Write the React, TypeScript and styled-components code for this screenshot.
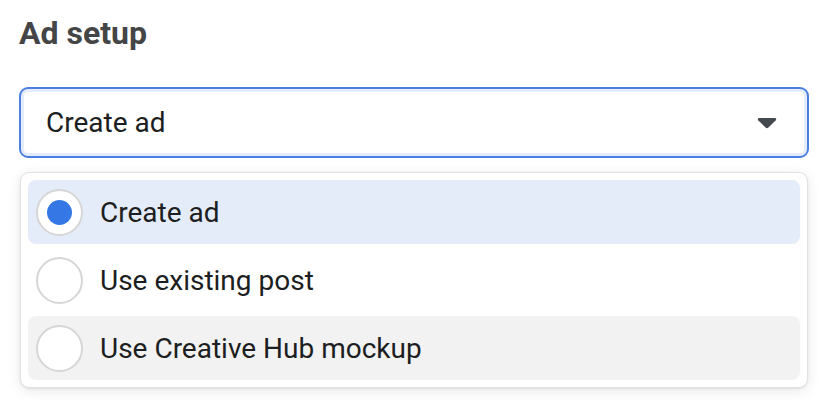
import React from "react";
import styled, { createGlobalStyle } from "styled-components";

const Global = createGlobalStyle`
  html, body { margin: 0; padding: 0; background: #ffffff; }
  body { font-family: Roboto, "Liberation Sans", Arial, sans-serif; -webkit-font-smoothing: antialiased; }
  * { box-sizing: border-box; }
`;

const Page = styled.div`
  width: 830px;
  height: 414px;
  padding: 13px 21px 0 19px;
  overflow: hidden;
`;

const Heading = styled.h2`
  margin: 0 0 34px;
  font-size: 32px;
  line-height: 40px;
  font-weight: 700;
  color: #444546;
`;

const Select = styled.div`
  height: 71px;
  display: flex;
  align-items: center;
  justify-content: space-between;
  padding: 0 30px 0 25px;
  border: 2px solid #4a7ee0;
  border-radius: 9px;
  box-shadow: inset 0 0 0 3px #e4ebf9;
  background: #fff;
  font-size: 28px;
  color: #1c1e21;
`;

const Menu = styled.div`
  margin: 14px 1px 0 1px;
  padding: 7px;
  border: 1px solid #e0e2e5;
  border-radius: 9px;
  background: #fff;
  box-shadow: 0 3px 14px rgba(0, 0, 0, 0.09), 0 1px 2px rgba(0, 0, 0, 0.08);
  display: flex;
  flex-direction: column;
  gap: 4px;
`;

const Row = styled.div<{ $tone: "active" | "hover" | "none" }>`
  height: 64px;
  display: flex;
  align-items: center;
  gap: 17px;
  padding-left: 8px;
  border-radius: 8px;
  background: ${(p) =>
    p.$tone === "active" ? "#e5ecf9" : p.$tone === "hover" ? "#f2f2f2" : "transparent"};
  font-size: 28px;
  color: #1c1e21;
`;

const Radio = styled.span<{ $on?: boolean }>`
  width: 47px;
  height: 47px;
  border-radius: 50%;
  border: 2px solid #d6d6d6;
  background: #fff;
  display: flex;
  align-items: center;
  justify-content: center;
  flex: none;
  &::after {
    content: "";
    display: ${(p) => (p.$on ? "block" : "none")};
    width: 25px;
    height: 25px;
    border-radius: 50%;
    background: #3578e5;
  }
`;

const Caret = () => (
  <svg width="20" height="12" viewBox="0 0 20 12" style={{ display: "block" }}>
    <path
      d="M2.2 1h15.6c1.2 0 1.8 1.4 1 2.3l-7.6 7.4c-.7.6-1.7.6-2.4 0L1.2 3.3C.4 2.4 1 1 2.2 1z"
      fill="#444950"
    />
  </svg>
);

const options: { label: string; tone: "active" | "hover" | "none"; on?: boolean }[] = [
  { label: "Create ad", tone: "active", on: true },
  { label: "Use existing post", tone: "none" },
  { label: "Use Creative Hub mockup", tone: "hover" },
];

export default function App() {
  return (
    <Page>
      <Global />
      <Heading>Ad setup</Heading>
      <Select>
        <span>Create ad</span>
        <Caret />
      </Select>
      <Menu>
        {options.map((o) => (
          <Row key={o.label} $tone={o.tone}>
            <Radio $on={o.on} />
            <span>{o.label}</span>
          </Row>
        ))}
      </Menu>
    </Page>
  );
}
